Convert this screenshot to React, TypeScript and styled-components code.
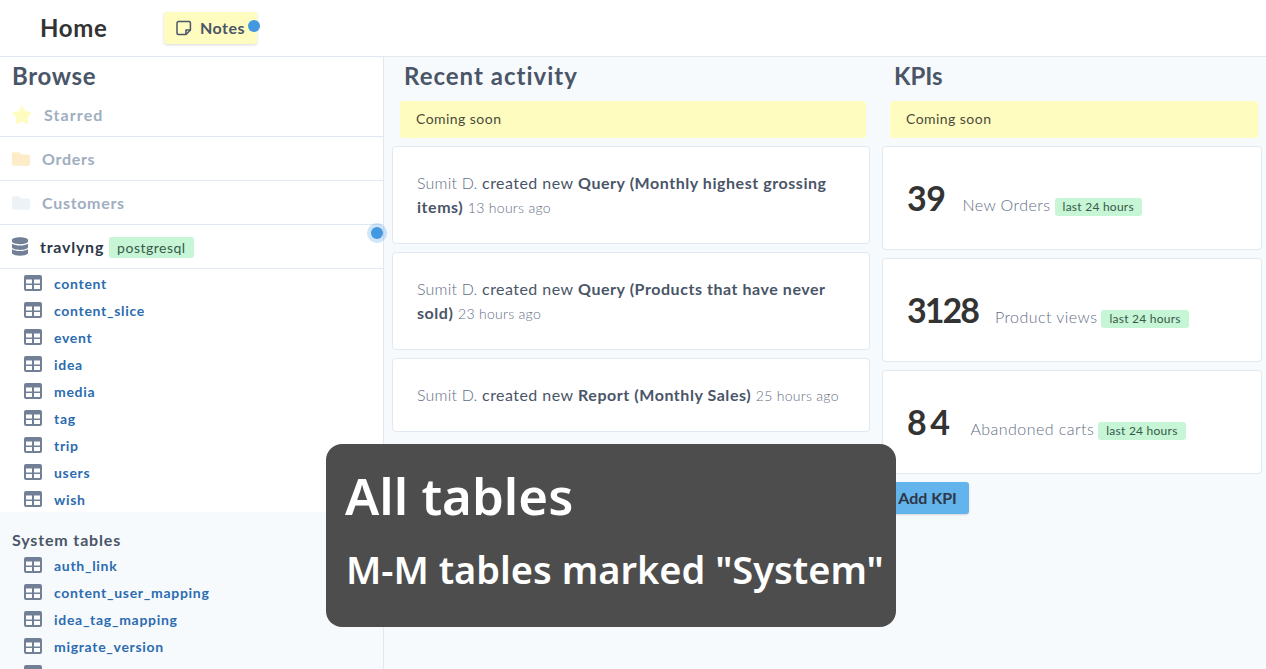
import styled, { createGlobalStyle } from "styled-components";
import { FaDatabase, FaFolder, FaStar } from "react-icons/fa";

const tables = ["content", "content_slice", "event", "idea", "media", "tag", "trip", "users", "wish"];
const systemTables = ["auth_link", "content_user_mapping", "idea_tag_mapping", "migrate_version"];

const activity = [
  { what: "Query (Monthly highest grossing items)", when: "13 hours ago" },
  { what: "Query (Products that have never sold)", when: "23 hours ago" },
  { what: "Report (Monthly Sales)", when: "25 hours ago" },
];

const kpis = [
  { value: "39", label: "New Orders", tracking: -0.5 },
  { value: "3128", label: "Product views", tracking: -2 },
  { value: "84", label: "Abandoned carts", tracking: 3.5 },
];

const TableIcon = () => (
  <StyledTableIcon viewBox="0 0 18 16" aria-hidden="true">
    <rect x="0" y="0" width="18" height="16" rx="2" fill="#718096" />
    <rect x="2" y="4.5" width="6" height="4" fill="#fff" />
    <rect x="10" y="4.5" width="6" height="4" fill="#fff" />
    <rect x="2" y="10" width="6" height="4" fill="#fff" />
    <rect x="10" y="10" width="6" height="4" fill="#fff" />
  </StyledTableIcon>
);

const NoteIcon = () => (
  <svg width="16" height="16" viewBox="0 0 16 16" fill="none" stroke="#4a5568" strokeWidth="1.5" aria-hidden="true">
    <path d="M10 14.5H2.5a1.5 1.5 0 0 1-1.5-1.5V3a1.5 1.5 0 0 1 1.5-1.5h10.5A1.5 1.5 0 0 1 14.5 3v7L10 14.5z" strokeLinejoin="round" />
    <path d="M10 14.5V10h4.5" strokeLinejoin="round" />
  </svg>
);

const TableRow = ({ name }: { name: string }) => (
  <StyledTableRow>
    <TableIcon />
    <StyledTableName>{name}</StyledTableName>
  </StyledTableRow>
);

export default function App() {
  return (
    <>
      <GlobalStyle />
      <StyledPage>
        <StyledHeader>
          <StyledTitle>Home</StyledTitle>
          <StyledNotes>
            <NoteIcon />
            Notes
            <StyledNotesDot />
          </StyledNotes>
        </StyledHeader>
        <StyledBody>
          <StyledSidebar>
            <StyledBrowse>Browse</StyledBrowse>
            <StyledStarredRow>
              <FaStar size={20} color="#fefcbf" />
              <StyledStarredLabel>Starred</StyledStarredLabel>
            </StyledStarredRow>
            <StyledFolderRow>
              <FaFolder size={18} color="#feebc8" />
              Orders
            </StyledFolderRow>
            <StyledFolderRow>
              <FaFolder size={18} color="#edf2f7" />
              Customers
            </StyledFolderRow>
            <StyledDatabaseRow>
              <StyledDatabaseIcon />
              <StyledDatabaseName>travlyng</StyledDatabaseName>
              <StyledEngineTag>postgresql</StyledEngineTag>
              <StyledPulse />
            </StyledDatabaseRow>
            <StyledTables>
              {tables.map((name) => (
                <TableRow key={name} name={name} />
              ))}
            </StyledTables>
            <StyledSystem>
              <StyledSystemTitle>System tables</StyledSystemTitle>
              {systemTables.map((name) => (
                <TableRow key={name} name={name} />
              ))}
              <StyledTableRow>
                <TableIcon />
              </StyledTableRow>
            </StyledSystem>
          </StyledSidebar>
          <StyledMain>
            <StyledActivity>
              <StyledHeading $tracking={1}>Recent activity</StyledHeading>
              <StyledComing>Coming soon</StyledComing>
              {activity.map((item) => (
                <StyledActivityCard key={item.when}>
                  Sumit D. <StyledCreated>created new</StyledCreated> <strong>{item.what}</strong>{" "}
                  <StyledWhen>{item.when}</StyledWhen>
                </StyledActivityCard>
              ))}
            </StyledActivity>
            <StyledKpis>
              <StyledHeading $tracking={0}>KPIs</StyledHeading>
              <StyledComing>Coming soon</StyledComing>
              {kpis.map((kpi) => (
                <StyledKpiCard key={kpi.label}>
                  <StyledKpiValue $tracking={kpi.tracking}>{kpi.value}</StyledKpiValue>
                  <StyledKpiLabel>{kpi.label}</StyledKpiLabel>
                  <StyledPeriod>last 24 hours</StyledPeriod>
                </StyledKpiCard>
              ))}
              <StyledAddKpi>Add KPI</StyledAddKpi>
            </StyledKpis>
          </StyledMain>
        </StyledBody>
        <StyledCaption>
          <StyledCaptionTitle>All tables</StyledCaptionTitle>
          <StyledCaptionText>M-M tables marked "System"</StyledCaptionText>
        </StyledCaption>
      </StyledPage>
    </>
  );
}

const GlobalStyle = createGlobalStyle`
  html, body {
    margin: 0;
    height: 100%;
    overflow: hidden;
  }

  body {
    font-family: "Lato", "Open Sans", sans-serif;
    color: #2d3748;
  }
`;

const StyledPage = styled.div`
  position: relative;
  width: 1266px;
  height: 669px;
  overflow: hidden;
  display: flex;
  flex-direction: column;
  background: #f7fafc;
`;

const StyledHeader = styled.header`
  height: 56px;
  flex: none;
  background: #fff;
  border-bottom: 1px solid #e2e8f0;
  display: flex;
  align-items: center;
  padding-left: 40px;
`;

const StyledTitle = styled.h1`
  margin: 0 0 1px;
  width: 124px;
  font-size: 24px;
  font-weight: 700;
  color: #333;
  letter-spacing: 0.7px;
`;

const StyledNotes = styled.div`
  position: relative;
  width: 93px;
  height: 32px;
  box-sizing: border-box;
  padding: 0 12px;
  margin-top: -1px;
  display: flex;
  align-items: center;
  gap: 8px;
  background: #fefcbf;
  border-radius: 3px;
  box-shadow: 0 1px 3px rgba(0, 0, 0, 0.15);
  color: #4a5568;
  font-size: 16px;
  font-weight: 700;
  letter-spacing: 0.5px;
`;

const StyledNotesDot = styled.span`
  position: absolute;
  top: 8px;
  right: -3px;
  width: 12px;
  height: 12px;
  border-radius: 50%;
  background: #4299e1;
`;

const StyledBody = styled.div`
  flex: 1;
  min-height: 0;
  display: flex;
`;

const StyledSidebar = styled.aside`
  position: relative;
  z-index: 1;
  width: 384px;
  flex: none;
  box-sizing: border-box;
  background: #fff;
  border-right: 1px solid #e2e8f0;
`;

const StyledBrowse = styled.h2`
  margin: 0;
  height: 36px;
  padding-left: 12px;
  font-size: 24px;
  line-height: 38px;
  font-weight: 700;
  color: #4a5568;
  letter-spacing: 0.65px;
`;

const StyledFolderRow = styled.div`
  height: 43px;
  border-bottom: 1px solid #e2e8f0;
  display: flex;
  align-items: center;
  gap: 12px;
  padding-left: 12px;
  color: #a0aec0;
  font-size: 16px;
  font-weight: 700;
  letter-spacing: 0.7px;
`;

const StyledStarredRow = styled(StyledFolderRow)`
  gap: 12px;
`;

const StyledStarredLabel = styled.span`
  letter-spacing: 1.1px;
`;

const StyledDatabaseRow = styled(StyledFolderRow)`
  position: relative;
  gap: 0;
  color: #2d3748;
`;

const StyledDatabaseIcon = styled(FaDatabase)`
  width: 16px;
  height: 19px;
  color: #718096;
`;

const StyledDatabaseName = styled.span`
  margin: 0 5px 0 12px;
  letter-spacing: 0.75px;
`;

const StyledEngineTag = styled.span`
  height: 21px;
  margin-top: 2px;
  padding: 0 8px;
  border-radius: 3px;
  background: #c6f6d5;
  font-size: 14px;
  font-weight: 400;
  line-height: 21px;
  color: #38594a;
  letter-spacing: 0.5px;
`;

const StyledPulse = styled.span`
  position: absolute;
  right: 0;
  top: 2px;
  width: 12px;
  height: 12px;
  border-radius: 50%;
  background: #4299e1;
  box-shadow: 0 0 0 4px rgba(66, 153, 225, 0.25);
`;

const StyledTables = styled.div`
  background: #fff;
  padding: 1px 0 0 24px;
  height: 242px;
`;

const StyledTableRow = styled.div`
  height: 27px;
  display: flex;
  align-items: center;
  gap: 12px;
`;

const StyledTableIcon = styled.svg`
  width: 18px;
  height: 16px;
  flex: none;
  margin-top: -2px;
`;

const StyledTableName = styled.span`
  color: #2b6cb0;
  font-size: 14px;
  font-weight: 700;
  letter-spacing: 0.7px;
`;

const StyledSystem = styled.div`
  background: #f7fafc;
  padding: 15px 0 0 24px;
`;

const StyledSystemTitle = styled.div`
  margin-left: -12px;
  height: 25px;
  line-height: 25px;
  font-size: 16px;
  font-weight: 700;
  color: #4a5568;
  letter-spacing: 0.85px;
`;

const StyledMain = styled.main`
  flex: 1;
  min-width: 0;
  display: flex;
  padding-left: 8px;
  gap: 12px;
`;

const StyledActivity = styled.section`
  width: 478px;
  flex: none;
`;

const StyledKpis = styled.section`
  width: 380px;
  flex: none;
`;

const StyledHeading = styled.h2<{ $tracking: number }>`
  margin: 0;
  height: 44px;
  padding-left: 12px;
  font-size: 24px;
  line-height: 38px;
  font-weight: 700;
  color: #4a5568;
  letter-spacing: ${({ $tracking }) => $tracking}px;
`;

const StyledComing = styled.div`
  height: 37px;
  margin: 0 4px 8px 8px;
  padding: 0 0 2px 16px;
  box-sizing: border-box;
  border-radius: 3px;
  background: #fefcbf;
  display: flex;
  align-items: center;
  font-size: 14px;
  color: #4a4a3a;
  letter-spacing: 0.45px;
`;

const StyledCard = styled.div`
  box-sizing: border-box;
  margin-bottom: 8px;
  background: #fff;
  border: 1px solid #e2e8f0;
  border-radius: 4px;
`;

const StyledActivityCard = styled(StyledCard)`
  padding: 24px;
  font-size: 16px;
  font-weight: 300;
  line-height: 24px;
  color: #5f6e84;
  letter-spacing: 0.2px;

  strong {
    font-weight: 700;
    color: #4a5568;
    letter-spacing: 0.55px;
  }
`;

const StyledCreated = styled.span`
  font-weight: 400;
  color: #4a5568;
  letter-spacing: 0.45px;
`;

const StyledWhen = styled.span`
  font-size: 14px;
  line-height: 1;
  letter-spacing: 0.3px;
  color: #5f6e84;
`;

const StyledKpiCard = styled(StyledCard)`
  height: 104px;
  padding: 0 24px;
  display: flex;
  align-items: center;
`;

const StyledKpiValue = styled.span<{ $tracking: number }>`
  margin: -2px 17px 0 0;
  font-size: 34px;
  font-weight: 700;
  color: #333;
  letter-spacing: ${({ $tracking }) => $tracking}px;
`;

const StyledKpiLabel = styled.span`
  margin-top: 12px;
  font-size: 16px;
  font-weight: 300;
  color: #5f6e84;
  letter-spacing: 0.45px;
`;

const StyledPeriod = styled.span`
  margin: 18px 0 0 4px;
  padding: 0 8px;
  height: 18px;
  line-height: 18px;
  border-radius: 3px;
  background: #c6f6d5;
  font-size: 12px;
  color: #38594a;
  letter-spacing: 0.25px;
`;

const StyledAddKpi = styled.button`
  display: block;
  width: 87px;
  height: 32px;
  padding: 0 0 2px 4px;
  border: 0;
  border-radius: 3px;
  background: #63b3ed;
  box-shadow: 0 1px 2px rgba(0, 0, 0, 0.15);
  font-family: inherit;
  font-size: 16px;
  font-weight: 700;
  color: #2d3748;
`;

const StyledCaption = styled.div`
  position: absolute;
  z-index: 2;
  left: 326px;
  top: 444px;
  width: 570px;
  height: 183px;
  box-sizing: border-box;
  padding: 16px 0 0 19px;
  border-radius: 16px;
  background: #4d4d4d;
  color: #fff;
  font-family: "Noto Sans", sans-serif;
`;

const StyledCaptionTitle = styled.div`
  font-size: 51px;
  line-height: 70px;
  font-weight: 600;
`;

const StyledCaptionText = styled.div`
  margin: 13px 0 0 1px;
  font-size: 38px;
  line-height: 52px;
  font-weight: 600;
  white-space: nowrap;
`;
